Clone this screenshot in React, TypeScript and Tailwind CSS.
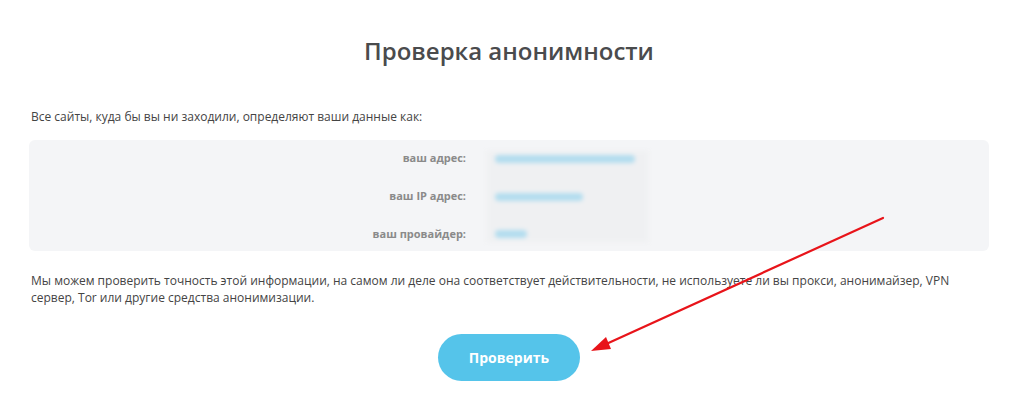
export default function App() {
  const rows = [
    { label: "ваш адрес:", w: "w-[140px]" },
    { label: "ваш IP адрес:", w: "w-[88px]" },
    { label: "ваш провайдер:", w: "w-[32px]" },
  ];

  return (
    <div
      className="relative h-[399px] w-full overflow-hidden bg-white pl-[29px] pr-[35px]"
      style={{ fontFamily: '"Open Sans", "Liberation Sans", sans-serif' }}
    >
      <h1 className="pt-[35px] text-center text-[24px] font-semibold leading-[32px] text-[#4a4b4d]">
        Проверка анонимности
      </h1>

      <p className="mt-[42px] pl-[2px] text-[12px] leading-[16px] text-[#444]">
        Все сайты, куда бы вы ни заходили, определяют ваши данные как:
      </p>

      <div className="mt-[15px] flex h-[111px] rounded-md bg-[#f4f5f7]">
        <div className="flex w-[437px] flex-col items-end gap-[22px] pt-[10px] text-[11px] font-bold leading-[16px] text-[#8a8a8a]">
          {rows.map((r) => (
            <div key={r.label}>{r.label}</div>
          ))}
        </div>
        <div className="ml-[21px] mt-[11px] flex h-[91px] w-[161px] flex-col gap-[22px] bg-[#eff0f2] pl-[8px] blur-[2px]">
          {rows.map((r) => (
            <div key={r.label} className="flex h-[16px] items-center">
              <div className={`h-[8px] rounded-sm bg-[#b3ddef] ${r.w}`} />
            </div>
          ))}
        </div>
      </div>

      <p className="mt-[21px] pl-[2px] text-[12px] leading-[17px] text-[#444]">
        Мы можем проверить точность этой информации, на самом ли деле она соответствует действительности, не используете ли вы прокси, анонимайзер, VPN сервер, Tor или другие средства анонимизации.
      </p>

      <div className="mt-[28px] flex justify-center">
        <button className="h-[47px] w-[142px] rounded-full bg-[#55c4ea] text-[14px] font-bold text-white">
          Проверить
        </button>
      </div>

      <svg className="pointer-events-none absolute left-0 top-0" width="1024" height="399">
        <line x1="883" y1="218" x2="604" y2="345" stroke="#e8141a" strokeWidth="2.2" strokeLinecap="round" />
        <polygon points="591,351 606,337 611,349" fill="#e8141a" />
      </svg>
    </div>
  );
}
